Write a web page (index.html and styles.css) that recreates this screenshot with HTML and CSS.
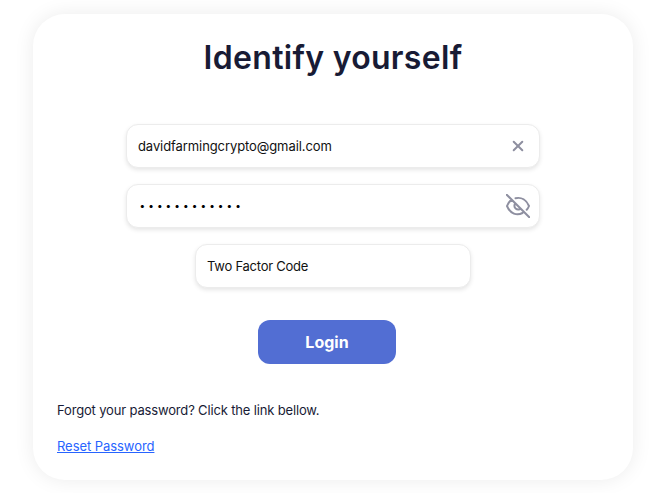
FILE: index.html
```html
<!DOCTYPE html>
<html lang="en">
<head>
<meta charset="utf-8">
<title>Identify yourself</title>
<link rel="stylesheet" href="styles.css">
</head>
<body>
<main class="card">
  <h1 class="title"><span class="title-text">Identify yourself</span></h1>
  <form class="form">
    <div class="field">
      <span class="email">davidfarmingcrypto@gmail.com</span>
      <svg class="icon" viewBox="0 0 24 24"><path d="M7.7 7.7l8.6 8.6M16.3 7.7l-8.6 8.6"/></svg>
    </div>
    <div class="field">
      <span class="dots">••••••••••••</span>
      <svg class="icon eye" viewBox="0 0 24 24"><path d="M.7.7l22.6 22.6M9.500 4.300C15.500 2.800 20.500 6 23 12c-.6 1.500-1.300 2.700-2.300 3.700M5.600 5.900C3.500 7.300 2 9.300 1 12c3.300 8 10 10 15.500 7M8.800 10.200c-1.400 3.600 1.900 6.200 5.200 4.800"/></svg>
    </div>
    <div class="field code-field"><span class="code">Two Factor Code</span></div>
    <button class="login" type="button"><span class="login-text">Login</span></button>
  </form>
  <p class="help"><span class="help-text">Forgot your password? Click the link bellow.</span></p>
  <a class="reset" href="#">Reset Password</a>
</main>
</body>
</html>
```
FILE: styles.css
```css
* { box-sizing: border-box; }
body {
  margin: 0;
  padding: 14px 29px 13px 33px;
  height: 493px;
  overflow: hidden;
  background: #fff;
  font-family: Inter, "Liberation Sans", sans-serif;
  color: #181b35;
}
.card {
  width: 600px;
  height: 466px;
  padding: 20px 24px;
  border-radius: 32px;
  background: #fff;
  box-shadow: 0 0 20px rgba(0, 0, 0, .08);
}
.title {
  margin: 0 0 42px;
  text-align: center;
  font-size: 32px;
  line-height: 48px;
  font-weight: 600;
}
.title-text { letter-spacing: .3px; }
.form {
  display: flex;
  flex-direction: column;
  align-items: center;
  gap: 16px;
}
.field {
  display: flex;
  align-items: center;
  justify-content: space-between;
  width: 414px;
  height: 44px;
  padding: 0 9px 0 11px;
  border: 1px solid #ececec;
  border-radius: 12px;
  background: #fff;
  box-shadow: 0 2px 4px rgba(0, 0, 0, .1);
  font-size: 13px;
  line-height: 20px;
  color: #111;
}
.code-field { width: 276px; }
.email { letter-spacing: -.09px; }
.code { letter-spacing: -.25px; }
.dots {
  padding: 0 0 2px 1.500px;
  font-size: 10px;
  letter-spacing: 3.080px;
  color: #000;
}
.icon {
  width: 24px;
  height: 24px;
  fill: none;
  stroke: #8e8fa0;
  stroke-width: 2;
  stroke-linecap: round;
}
.login {
  width: 138px;
  height: 44px;
  margin: 16px 12px 0 0;
  padding: 0;
  border: 0;
  border-radius: 12px;
  background: #526ed3;
  color: #fff;
  font: 700 16px/24px Inter, "Liberation Sans", sans-serif;
}
.help {
  margin: 36px 0 16px;
  font-size: 13px;
  line-height: 20px;
}
.help-text { letter-spacing: -.16px; }
.reset {
  display: block;
  width: max-content;
  font-size: 13px;
  line-height: 20px;
  letter-spacing: -.06px;
  color: #2764ff;
  text-decoration: underline;
}
```
